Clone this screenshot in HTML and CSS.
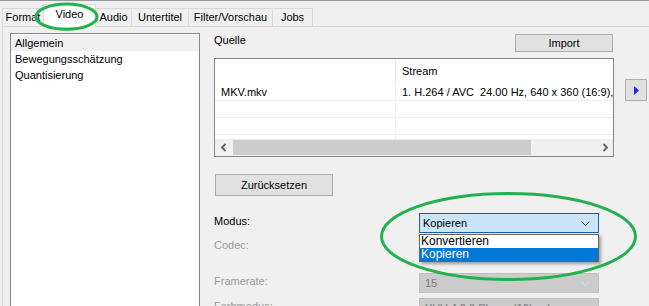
FILE: index.html
```html
<!DOCTYPE html>
<html lang="de">
<head>
<meta charset="utf-8">
<title>Video</title>
<link rel="stylesheet" href="styles.css">
</head>
<body>
<div class="window">
  <div class="tabstrip">
    <div class="tab tab-format">Format</div>
    <div class="tab tab-video is-active">Video</div>
    <div class="tab tab-audio">Audio</div>
    <div class="tab tab-subs">Untertitel</div>
    <div class="tab tab-filter">Filter/Vorschau</div>
    <div class="tab tab-jobs">Jobs</div>
  </div>
  <div class="page">
    <ul class="nav-list">
      <li class="nav-item is-selected">Allgemein</li>
      <li class="nav-item">Bewegungsschätzung</li>
      <li class="nav-item">Quantisierung</li>
    </ul>
    <div class="content">
      <div class="source-head">
        <span class="source-label">Quelle</span>
        <button class="btn btn-import">Import</button>
      </div>
      <div class="source-row">
        <div class="listview">
          <div class="lv-header">
            <div class="lv-col lv-col-name"></div>
            <div class="lv-col lv-col-stream">Stream</div>
          </div>
          <div class="lv-body">
            <div class="lv-row">
              <div class="lv-cell lv-cell-name">MKV.mkv</div>
              <div class="lv-cell lv-cell-stream">1. H.264 / AVC  24.00 Hz, 640 x 360 (16:9), 0 kb/s</div>
            </div>
            <div class="lv-row"><div class="lv-cell lv-cell-name"></div><div class="lv-cell lv-cell-stream"></div></div>
            <div class="lv-row"><div class="lv-cell lv-cell-name"></div><div class="lv-cell lv-cell-stream"></div></div>
            <div class="lv-row"><div class="lv-cell lv-cell-name"></div><div class="lv-cell lv-cell-stream"></div></div>
          </div>
          <div class="hscroll">
            <div class="hs-arrow">
              <svg width="8" height="9" viewBox="0 0 8 9"><polyline points="5.5,1 2,4.5 5.5,8" fill="none" stroke="#606060" stroke-width="1.8"/></svg>
            </div>
            <div class="hs-track"><div class="hs-thumb"></div></div>
            <div class="hs-arrow">
              <svg width="8" height="9" viewBox="0 0 8 9"><polyline points="2.5,1 6,4.5 2.5,8" fill="none" stroke="#606060" stroke-width="1.8"/></svg>
            </div>
          </div>
        </div>
        <button class="btn btn-arrow">
          <svg width="6" height="9" viewBox="0 0 6 9"><polygon points="0,0 5,4.5 0,9" fill="#2424ff"/></svg>
        </button>
      </div>
      <button class="btn btn-reset">Zurücksetzen</button>
      <div class="form">
        <div class="field">
          <span class="field-label">Modus:</span>
          <div class="combo is-focused">
            <span class="combo-text">Kopieren</span>
            <svg class="combo-chevron" width="9" height="5" viewBox="0 0 9 5"><polyline points="0.5,0.5 4.5,4.5 8.5,0.5" fill="none" stroke="#5a5a5a" stroke-width="1"/></svg>
            <ul class="dropdown">
              <li class="dd-item">Konvertieren</li>
              <li class="dd-item is-selected">Kopieren</li>
            </ul>
          </div>
        </div>
        <div class="field">
          <span class="field-label is-disabled">Codec:</span>
          <div class="combo is-disabled">
            <span class="combo-text"></span>
          </div>
        </div>
        <div class="field field-spaced">
          <span class="field-label is-disabled">Framerate:</span>
          <div class="combo is-disabled">
            <span class="combo-text">15</span>
            <svg class="combo-chevron" width="9" height="5" viewBox="0 0 9 5"><polyline points="0.5,0.5 4.5,4.5 8.5,0.5" fill="none" stroke="#dedede" stroke-width="1"/></svg>
          </div>
        </div>
        <div class="field field-tight">
          <span class="field-label is-disabled">Farbmodus:</span>
          <div class="combo is-disabled">
            <span class="combo-text">YUV 4:2:0 Planar (12bpp)</span>
            <svg class="combo-chevron" width="9" height="5" viewBox="0 0 9 5"><polyline points="0.5,0.5 4.5,4.5 8.5,0.5" fill="none" stroke="#dedede" stroke-width="1"/></svg>
          </div>
        </div>
      </div>
    </div>
  </div>
  <svg class="annotations" width="649" height="306" viewBox="0 0 649 306">
    <ellipse cx="66.5" cy="16.7" rx="30.5" ry="12.6" fill="none" stroke="#22b14c" stroke-width="3"/>
    <ellipse cx="508.5" cy="236.5" rx="127" ry="43" fill="none" stroke="#22b14c" stroke-width="3"/>
  </svg>
</div>
</body>
</html>
```

FILE: styles.css
```css
* {
  box-sizing: border-box;
}

html, body {
  margin: 0;
  padding: 0;
}

body {
  width: 649px;
  height: 306px;
  overflow: hidden;
  background: #f0f0f0;
  font-family: "Liberation Sans", Arial, sans-serif;
  font-size: 11px;
  color: #000;
}

.window {
  position: relative;
  height: 306px;
  overflow: hidden;
  border-top: 1px solid #9a9a9a;
}

/* Tabs */
.tabstrip {
  display: flex;
  align-items: flex-end;
  height: 25px;
  padding-left: 2px;
}

.tab {
  position: relative;
  flex: none;
  height: 18px;
  line-height: 17px;
  text-align: center;
  border: 1px solid #d9d9d9;
  border-bottom: none;
  background: #f0f0f0;
  white-space: nowrap;
}

.tab + .tab {
  margin-left: -1px;
}

.tab.is-active {
  z-index: 2;
  height: 23px;
  margin-bottom: -1px;
  background: #fff;
  padding-bottom: 2px;
  line-height: 18px;
}

.tab-format { width: 42px; }
.tab-video { width: 53px; }
.tab-audio { width: 37px; }
.tab-subs { width: 58px; }
.tab-filter { width: 85px; }
.tab-jobs { width: 41px; }

/* Page */
.page {
  display: flex;
  align-items: flex-start;
  margin-left: 2px;
  height: 300px;
  border-top: 1px solid #d9d9d9;
  border-left: 1px solid #d9d9d9;
  padding: 6px 0 0 7px;
}

.nav-list {
  flex: none;
  width: 190px;
  height: 300px;
  margin: 0;
  padding: 1px 0 0;
  list-style: none;
  background: #fff;
  border: 1px solid #828790;
}

.nav-item {
  height: 16px;
  line-height: 16px;
  padding-left: 4px;
}

.nav-item.is-selected {
  background: #f0f0f0;
}

.content {
  flex: none;
  margin-left: 14px;
  display: flex;
  flex-direction: column;
  align-items: flex-start;
}

.content > * {
  flex: none;
}

.btn {
  font: inherit;
  color: #000;
  background: #e1e1e1;
  border: 1px solid #adadad;
  padding: 0;
  margin: 0;
  display: flex;
  align-items: center;
  justify-content: center;
}

.source-head {
  display: flex;
  justify-content: space-between;
  align-items: flex-start;
  width: 400px;
  margin-top: 1px;
}

.source-label {
  line-height: 13px;
}

.btn-import {
  width: 98px;
  height: 18px;
  margin-right: 1px;
}

.source-row {
  display: flex;
  align-items: flex-start;
  margin-top: 6px;
}

/* List view */
.listview {
  flex: none;
  width: 400px;
  height: 99px;
  border: 1px solid #828790;
  background: #fff;
  display: flex;
  flex-direction: column;
  overflow: hidden;
}

.lv-header {
  display: flex;
  height: 25px;
  flex: none;
}

.lv-col {
  line-height: 25px;
}

.lv-col-name {
  width: 181px;
  border-right: 1px solid #e5e5e5;
  margin-bottom: 1px;
}

.lv-col-stream {
  padding-left: 6px;
}

.lv-body {
  flex: 1;
  overflow: hidden;
}

.lv-row {
  display: flex;
  height: 17px;
  border-bottom: 1px solid #f0f0f0;
}

.lv-cell {
  line-height: 16px;
  white-space: pre;
  overflow: hidden;
}

.lv-cell-name {
  flex: none;
  width: 181px;
  padding-left: 6px;
  border-right: 1px solid #f0f0f0;
}

.lv-cell-stream {
  flex: 1;
  min-width: 0;
  padding-left: 6px;
}

.hscroll {
  flex: none;
  display: flex;
  height: 17px;
  background: #f0f0f0;
}

.hs-arrow {
  width: 17px;
  display: flex;
  align-items: center;
  justify-content: center;
}

.hs-track {
  flex: 1;
  padding: 1px 65px 1px 1px;
}

.hs-thumb {
  height: 100%;
  background: #cdcdcd;
}

.btn-arrow {
  flex: none;
  width: 22px;
  height: 22px;
  margin-left: 11px;
  margin-top: 21px;
  padding-left: 2px;
}

.btn-reset {
  width: 118px;
  height: 22px;
  margin-top: 17px;
  margin-left: 1px;
}

/* Form */
.form {
  margin-top: 17px;
  display: flex;
  flex-direction: column;
}

.field {
  flex: none;
  display: grid;
  grid-template-columns: 205px 180px;
  align-items: start;
}

.field + .field {
  margin-top: 4px;
}

.field + .field-spaced {
  margin-top: 16px;
}

.field + .field-tight {
  margin-top: 5px;
}

.field-label {
  line-height: 16px;
}

.field-label.is-disabled {
  color: #9b9b9b;
}

.combo {
  position: relative;
  height: 20px;
  display: flex;
  align-items: center;
  justify-content: space-between;
  padding: 0 8px 0 3px;
  border: 1px solid #bfbfbf;
  background: #cccccc;
  color: #7a7a7a;
}

.combo.is-focused {
  z-index: 3;
  border-color: #1b5fa0;
  background: #cce4f7;
  color: #000;
}

.combo.is-disabled .combo-text {
  padding-left: 2px;
}

.combo-chevron {
  flex: none;
}

.dropdown {
  position: absolute;
  top: 20px;
  left: -1px;
  width: 180px;
  height: 28px;
  margin: 0;
  padding: 0;
  list-style: none;
  background: #fff;
  border: 1px solid #646464;
  box-shadow: 2px 2px 3px rgba(0, 0, 0, 0.35);
}

.dd-item {
  height: 13px;
  line-height: 13px;
  padding-left: 1px;
  color: #000;
  font-size: 12px;
}

.dd-item.is-selected {
  background: #0078d7;
  color: #fff;
}

/* Annotations */
.annotations {
  position: absolute;
  left: 0;
  top: -1px;
  pointer-events: none;
  z-index: 10;
}
```
